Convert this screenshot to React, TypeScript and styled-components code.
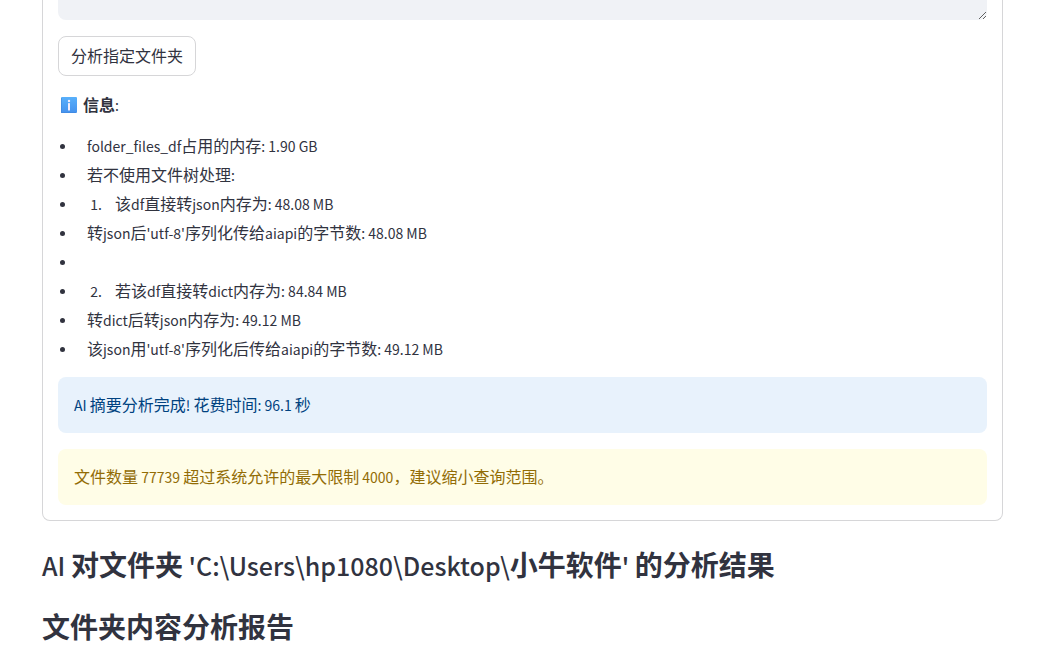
import React from 'react';
import styled, { createGlobalStyle } from 'styled-components';

const GlobalStyle = createGlobalStyle`
  *, *::before, *::after { box-sizing: border-box; }
  body {
    margin: 0;
    background: #ffffff;
    color: #31333f;
    font-family: 'Noto Sans CJK SC', 'Open Sans', sans-serif;
    font-size: 16px;
    line-height: 25px;
  }
`;

const Page = styled.main`
  padding: 0 36px 32px 42px;
`;

const Card = styled.section`
  display: flex;
  flex-direction: column;
  align-items: stretch;
  gap: 16px;
  padding: 0 15px 15px;
  border: 1px solid #d6d6d8;
  border-top: 0;
  border-radius: 0 0 8px 8px;
`;

const FolderInput = styled.textarea`
  display: block;
  width: 100%;
  height: 20px;
  padding: 0 16px;
  border: 0;
  border-radius: 0 0 8px 8px;
  background: #f0f2f6;
  color: inherit;
  font: inherit;
  resize: vertical;
  outline: none;
`;

const ActionButton = styled.button`
  align-self: flex-start;
  height: 40px;
  padding: 0 12px 2px;
  border: 1px solid #d6d6d8;
  border-radius: 8px;
  background: #ffffff;
  color: inherit;
  font: inherit;
  cursor: pointer;
`;

const InfoTitle = styled.p`
  display: flex;
  align-items: center;
  gap: 6px;
  margin: 0;
  padding-left: 3px;
  font-weight: 700;
`;

const Latin = styled.span<{ $size: number; $weight?: number }>`
  font-size: ${(p) => p.$size}px;
  font-weight: ${(p) => p.$weight ?? 400};
  line-height: 1;
`;

const ItemList = styled.ul`
  display: flex;
  flex-direction: column;
  gap: 4px;
  margin: 0;
  padding: 0 0 0 1px;

  > li::marker { font-size: 13px; }
`;

const Item = styled.li`
  min-height: 25px;
  margin-left: 18px;
  padding-left: 10px;
`;

const NumberedList = styled.ol`
  margin: 0;
  padding: 0;

  li::marker { font-size: 14px; }
`;

const Alert = styled.div<{ $tone: 'info' | 'warning' }>`
  padding: 15px 16px 16px;
  border-radius: 8px;
  background: ${(p) => (p.$tone === 'info' ? '#e8f2fc' : '#fffde7')};
  color: ${(p) => (p.$tone === 'info' ? '#004280' : '#926c05')};
`;

const Heading = styled.h2`
  margin: 24px 0 0;
  font-size: 28px;
  font-weight: 700;
  line-height: 38px;
`;

/* Latin runs are set smaller than the Chinese characters around them. */
function Mixed({ text, size = 14, weight }: { text: string; size?: number; weight?: number }) {
  return (
    <>
      {text.split(/([\x20-\x7e]+)/).map((part, i) =>
        i % 2 ? <Latin key={i} $size={size} $weight={weight}>{part}</Latin> : part,
      )}
    </>
  );
}

function InfoIcon() {
  return (
    <svg width="16" height="16" viewBox="0 0 16 16" aria-hidden="true">
      <defs>
        <linearGradient id="info-fill" x1="0" y1="0" x2="0" y2="1">
          <stop offset="0" stopColor="#58b0fb" />
          <stop offset="1" stopColor="#4592ee" />
        </linearGradient>
      </defs>
      <rect width="16" height="16" rx="1" fill="url(#info-fill)" />
      <path d="M0 1V15Q0 16 1 16H15" fill="none" stroke="#3c82d8" strokeWidth="1" />
      <circle cx="8" cy="4" r="1.2" fill="#f4eefc" />
      <rect x="7" y="6" width="2" height="7.5" rx="0.6" fill="#f4eefc" />
    </svg>
  );
}

type Entry = { text: string; number?: number };

const entries: Entry[] = [
  { text: 'folder_files_df占用的内存: 1.90 GB' },
  { text: '若不使用文件树处理:' },
  { text: '该df直接转json内存为: 48.08 MB', number: 1 },
  { text: "转json后'utf-8'序列化传给aiapi的字节数: 48.08 MB" },
  { text: '' },
  { text: '若该df直接转dict内存为: 84.84 MB', number: 2 },
  { text: '转dict后转json内存为: 49.12 MB' },
  { text: "该json用'utf-8'序列化后传给aiapi的字节数: 49.12 MB" },
];

export default function App() {
  return (
    <>
      <GlobalStyle />
      <Page>
        <Card>
          <FolderInput aria-label="文件夹" />
          <ActionButton type="button">分析指定文件夹</ActionButton>
          <InfoTitle>
            <InfoIcon />
            <span><Mixed text="信息:" /></span>
          </InfoTitle>
          <ItemList>
            {entries.map((entry, i) => (
              <Item key={i}>
                {entry.number ? (
                  <NumberedList start={entry.number}>
                    <Item><Mixed text={entry.text} /></Item>
                  </NumberedList>
                ) : (
                  <Mixed text={entry.text} />
                )}
              </Item>
            ))}
          </ItemList>
          <Alert $tone="info" role="status">
            <Mixed text="AI 摘要分析完成! 花费时间: 96.1 秒" />
          </Alert>
          <Alert $tone="warning" role="alert">
            <Mixed text="文件数量 77739 超过系统允许的最大限制 4000，建议缩小查询范围。" />
          </Alert>
        </Card>
        <Heading>
          <Mixed text="AI 对文件夹 'C:\Users\hp1080\Desktop\小牛软件' 的分析结果" size={25} weight={500} />
        </Heading>
        <Heading>文件夹内容分析报告</Heading>
      </Page>
    </>
  );
}
